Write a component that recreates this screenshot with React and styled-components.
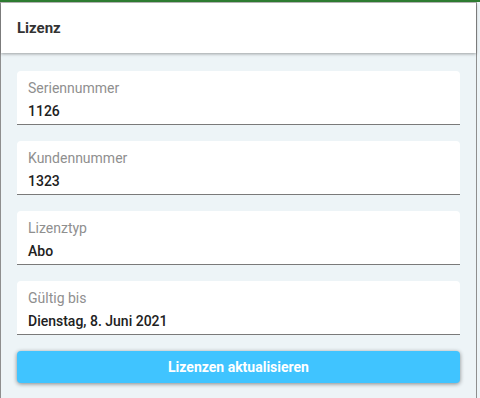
import styled, { createGlobalStyle } from "styled-components";

const GlobalStyle = createGlobalStyle`
  html, body {
    margin: 0;
    padding: 0;
    background: #edf4f7;
    font-family: Roboto, "Liberation Sans", sans-serif;
  }
`;

const fields = [
  { label: "Seriennummer", value: "1126" },
  { label: "Kundennummer", value: "1323" },
  { label: "Lizenztyp", value: "Abo" },
  { label: "Gültig bis", value: "Dienstag, 8. Juni 2021" },
];

export default function App() {
  return (
    <>
      <GlobalStyle />
      <TopBar />
      <Panel>
        <Header>
          <h1>Lizenz</h1>
        </Header>
        <Body>
          {fields.map((f) => (
            <Field key={f.label}>
              <Label>{f.label}</Label>
              <Value>{f.value}</Value>
            </Field>
          ))}
          <Button>Lizenzen aktualisieren</Button>
        </Body>
      </Panel>
    </>
  );
}

const TopBar = styled.div`
  height: 2px;
  width: 100%;
  background: #2e7d32;
`;

const Panel = styled.section`
  width: 477px;
  height: 396px;
  box-sizing: border-box;
  border-left: 1px solid #8e8e8e;
  border-right: 1px solid #8e8e8e;
  border-top: 1px solid #bdbdbd;
  background: #edf4f7;
  display: flex;
  flex-direction: column;
`;

const Header = styled.header`
  height: 50px;
  background: #fff;
  display: flex;
  align-items: center;
  padding-left: 16px;
  box-shadow: 0 1px 3px rgba(0, 0, 0, 0.35);
  position: relative;
  z-index: 1;

  h1 {
    margin: 0;
    font-size: 15px;
    font-weight: 700;
    color: #333;
  }
`;

const Body = styled.div`
  display: flex;
  flex-direction: column;
  gap: 16px;
  padding: 18px 16px 0 16px;
`;

const Field = styled.div`
  background: #fff;
  border-radius: 4px 4px 0 0;
  border-bottom: 1px solid #7a7a7a;
  padding: 9px 11px 0 11px;
  height: 44px;
  display: flex;
  flex-direction: column;
  gap: 6px;
`;

const Label = styled.div`
  font-size: 14px;
  line-height: 17px;
  color: #8f8f8f;
`;

const Value = styled.div`
  font-size: 14px;
  line-height: 17px;
  font-weight: 500;
  color: #212121;
`;

const Button = styled.button`
  height: 32px;
  border: none;
  border-radius: 4px;
  background: #40c4ff;
  color: #fff;
  font-family: Roboto, "Liberation Sans", sans-serif;
  font-size: 14px;
  font-weight: 700;
  box-shadow: 0 1px 4px rgba(0, 0, 0, 0.45);
  cursor: pointer;
`;
